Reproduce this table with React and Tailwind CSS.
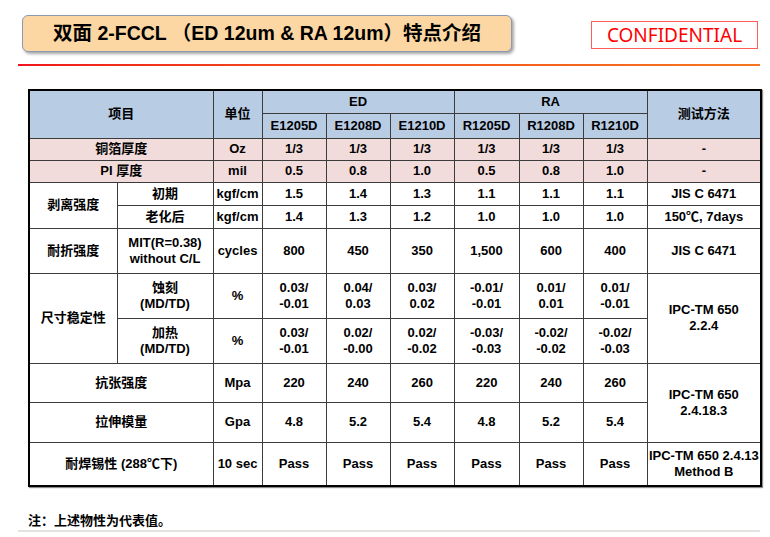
import React from "react";

const cell = "border border-[#3c3c3c] text-center align-middle p-0";
const head = cell + " bg-[#b8cce4]";
const pink = cell + " bg-[#f2dcdb]";

const rows = [
  { label: "剥离强度", sub: "初期", unit: "kgf/cm", vals: ["1.5", "1.4", "1.3", "1.1", "1.1", "1.1"], method: "JIS C 6471", h: "h-[23px]", span: 2 },
  { sub: "老化后", unit: "kgf/cm", vals: ["1.4", "1.3", "1.2", "1.0", "1.0", "1.0"], method: "150℃, 7days", h: "h-[23px]" },
];

const Two = ({ a, b }) => (
  <>
    {a}
    <br />
    {b}
  </>
);

export default function App() {
  return (
    <div className="w-[770px] h-[537px] bg-white overflow-hidden font-['Liberation_Sans','Noto_Sans_CJK_SC',sans-serif] font-bold text-black">
      {/* header */}
      <div className="flex items-start pl-[22px] pt-[15px]">
        <div className="w-[490px] h-[37px] rounded-[6px] border border-[#8a9ab2] bg-[#fcd7a3] shadow-[2px_2px_3px_rgba(0,0,0,0.35)] flex items-center justify-center text-[19.5px] leading-none">
          双面 2-FCCL （ED 12um &amp; RA 12um）特点介绍
        </div>
        <div className="ml-[79px] mt-[6px] w-[167px] h-[28px] border border-[#ff5c5c] flex items-center justify-center font-['Noto_Sans',sans-serif] font-normal text-[19px] leading-none text-[#ff0000]">
          CONFIDENTIAL
        </div>
      </div>
      <div className="ml-[18px] mt-[12px] w-[742px] h-[2px] bg-linear-to-r from-[#f0141c] to-[#f5761f]" />

      {/* spec table */}
      <table className="ml-[28px] mt-[23px] w-[732px] table-fixed border-collapse border-2 border-black text-[13px] leading-[16px] shadow-[1px_1px_1px_rgba(0,0,0,0.45)]">
        <colgroup>
          <col className="w-[88px]" />
          <col className="w-[96px]" />
          <col className="w-[49px]" />
          <col className="w-[64px]" />
          <col className="w-[64px]" />
          <col className="w-[64px]" />
          <col className="w-[65px]" />
          <col className="w-[64px]" />
          <col className="w-[64px]" />
          <col className="w-[114px]" />
        </colgroup>
        <tbody>
          <tr className="h-[23px]">
            <td colSpan={2} rowSpan={2} className={head}>项目</td>
            <td rowSpan={2} className={head}>单位</td>
            <td colSpan={3} className={head}>ED</td>
            <td colSpan={3} className={head}>RA</td>
            <td rowSpan={2} className={head}>测试方法</td>
          </tr>
          <tr className="h-[25px]">
            {["E1205D", "E1208D", "E1210D", "R1205D", "R1208D", "R1210D"].map((m) => (
              <td key={m} className={head}>{m}</td>
            ))}
          </tr>
          <tr className="h-[22px]">
            <td colSpan={2} className={pink}>铜箔厚度</td>
            <td className={pink}>Oz</td>
            {["1/3", "1/3", "1/3", "1/3", "1/3", "1/3"].map((v, i) => (
              <td key={i} className={pink}>{v}</td>
            ))}
            <td className={pink}>-</td>
          </tr>
          <tr className="h-[22px]">
            <td colSpan={2} className={pink}>PI 厚度</td>
            <td className={pink}>mil</td>
            {["0.5", "0.8", "1.0", "0.5", "0.8", "1.0"].map((v, i) => (
              <td key={i} className={pink}>{v}</td>
            ))}
            <td className={pink}>-</td>
          </tr>
          {rows.map((r, k) => (
            <tr key={k} className={r.h}>
              {r.label && <td rowSpan={r.span} className={cell}>{r.label}</td>}
              <td className={cell}>{r.sub}</td>
              <td className={cell}>{r.unit}</td>
              {r.vals.map((v, i) => (
                <td key={i} className={cell}>{v}</td>
              ))}
              <td className={cell}>{r.method}</td>
            </tr>
          ))}
          <tr className="h-[45px]">
            <td className={cell}>耐折强度</td>
            <td className={cell}><Two a="MIT(R=0.38)" b="without C/L" /></td>
            <td className={cell}>cycles</td>
            {["800", "450", "350", "1,500", "600", "400"].map((v, i) => (
              <td key={i} className={cell}>{v}</td>
            ))}
            <td className={cell}>JIS C 6471</td>
          </tr>
          <tr className="h-[45px]">
            <td rowSpan={2} className={cell}>尺寸稳定性</td>
            <td className={cell}><Two a="蚀刻" b="(MD/TD)" /></td>
            <td className={cell}>%</td>
            {[["0.03/", "-0.01"], ["0.04/", "0.03"], ["0.03/", "0.02"], ["-0.01/", "-0.01"], ["0.01/", "0.01"], ["0.01/", "-0.01"]].map((v, i) => (
              <td key={i} className={cell}><Two a={v[0]} b={v[1]} /></td>
            ))}
            <td rowSpan={2} className={cell}><Two a="IPC-TM 650" b="2.2.4" /></td>
          </tr>
          <tr className="h-[45px]">
            <td className={cell}><Two a="加热" b="(MD/TD)" /></td>
            <td className={cell}>%</td>
            {[["0.03/", "-0.01"], ["0.02/", "-0.00"], ["0.02/", "-0.02"], ["-0.03/", "-0.03"], ["-0.02/", "-0.02"], ["-0.02/", "-0.03"]].map((v, i) => (
              <td key={i} className={cell}><Two a={v[0]} b={v[1]} /></td>
            ))}
          </tr>
          <tr className="h-[39px]">
            <td colSpan={2} className={cell}>抗张强度</td>
            <td className={cell}>Mpa</td>
            {["220", "240", "260", "220", "240", "260"].map((v, i) => (
              <td key={i} className={cell}>{v}</td>
            ))}
            <td rowSpan={2} className={cell}><Two a="IPC-TM 650" b="2.4.18.3" /></td>
          </tr>
          <tr className="h-[40px]">
            <td colSpan={2} className={cell}>拉伸模量</td>
            <td className={cell}>Gpa</td>
            {["4.8", "5.2", "5.4", "4.8", "5.2", "5.4"].map((v, i) => (
              <td key={i} className={cell}>{v}</td>
            ))}
          </tr>
          <tr className="h-[44px]">
            <td colSpan={2} className={cell}>耐焊锡性 (288℃下)</td>
            <td className={cell}>10 sec</td>
            {["Pass", "Pass", "Pass", "Pass", "Pass", "Pass"].map((v, i) => (
              <td key={i} className={cell}>{v}</td>
            ))}
            <td className={cell}><Two a="IPC-TM 650 2.4.13" b="Method B" /></td>
          </tr>
        </tbody>
      </table>

      {/* note */}
      <p className="ml-[28px] mt-[26px] text-[13px] leading-[16px]">注：上述物性为代表值。</p>
      <div className="ml-[18px] mt-[1px] w-[742px] h-[2px] bg-[#e3e3df]" />
    </div>
  );
}
